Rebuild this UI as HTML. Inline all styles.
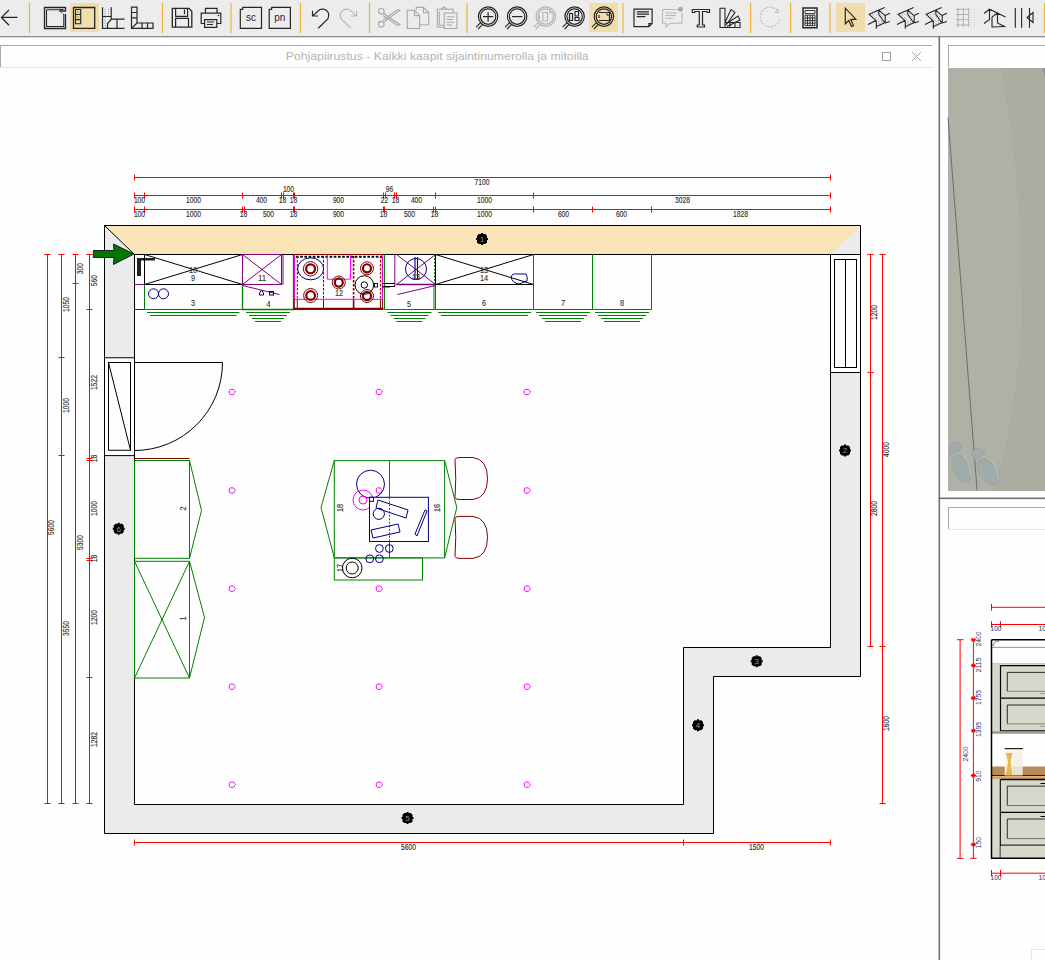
<!DOCTYPE html>
<html><head><meta charset="utf-8"><style>
html,body{margin:0;padding:0;background:#fff;width:1045px;height:960px;overflow:hidden}
svg{display:block;font-family:"Liberation Sans",sans-serif}
</style></head><body>
<svg width="1045" height="960" viewBox="0 0 1045 960">
<rect x="0" y="0" width="1045" height="960" fill="#fefefe"/>
<rect x="0" y="0" width="1045" height="36" fill="#ececec"/>
<rect x="0" y="36" width="1045" height="1.3" fill="#8c8c8c"/>
<line x1="29.5" y1="3" x2="29.5" y2="33" stroke="#f0b43c" stroke-width="1.2"/>
<line x1="162.5" y1="3" x2="162.5" y2="33" stroke="#f0b43c" stroke-width="1.2"/>
<line x1="231" y1="3" x2="231" y2="33" stroke="#f0b43c" stroke-width="1.2"/>
<line x1="300.5" y1="3" x2="300.5" y2="33" stroke="#f0b43c" stroke-width="1.2"/>
<line x1="369.5" y1="3" x2="369.5" y2="33" stroke="#f0b43c" stroke-width="1.2"/>
<line x1="467" y1="3" x2="467" y2="33" stroke="#f0b43c" stroke-width="1.2"/>
<line x1="623" y1="3" x2="623" y2="33" stroke="#f0b43c" stroke-width="1.2"/>
<line x1="750.6" y1="3" x2="750.6" y2="33" stroke="#f0b43c" stroke-width="1.2"/>
<line x1="790.6" y1="3" x2="790.6" y2="33" stroke="#f0b43c" stroke-width="1.2"/>
<line x1="830" y1="3" x2="830" y2="33" stroke="#f0b43c" stroke-width="1.2"/>
<rect x="70" y="3" width="29" height="29" fill="#f1dcab"/>
<rect x="589" y="3" width="29" height="29" fill="#f1dcab"/>
<rect x="836" y="3" width="29" height="29" fill="#f1dcab"/>
<path d="M1.2 17.4 H17.5 M9 10 L1.5 17.4 L9 25.2" fill="none" stroke="#262626" stroke-width="1.3" stroke-linejoin="miter" />
<path d="M59.5 11 H65.5 V7.5 H44.5 V28.5 H65.5 V14" fill="none" stroke="#262626" stroke-width="1.3" stroke-linejoin="miter" />
<path d="M59.5 9.5 H63.5 M46.5 9.7 H63.5 M46.5 9.7 V26.5 H63.8 V14" fill="none" stroke="#262626" stroke-width="1.1" stroke-linejoin="miter" />
<path d="M59.5 11 L64 14.5" fill="none" stroke="#262626" stroke-width="1" stroke-linejoin="miter" stroke-dasharray="1 1"/>
<path d="M73.5 7.5 H94.7 V28.4 H73.5 Z" fill="none" stroke="#262626" stroke-width="1.3" stroke-linejoin="miter" />
<path d="M75.5 9.5 H80.7 V23.7 H75.5 Z M75.5 14.5 H80.7 M75.5 19.6 H80.7" fill="none" stroke="#262626" stroke-width="1.1" stroke-linejoin="miter" />
<path d="M77 12 H79.5 M77 17 H79.5" fill="none" stroke="#b07a30" stroke-width="0.8" stroke-linejoin="miter" />
<path d="M102.5 7.2 V28.4 H124.5 M111.2 7.2 V19.2 H124.5 M102.5 16.5 H111.2 M111.2 19.5 L107.5 23.5 V28.4 M117 19.5 V28.4" fill="none" stroke="#262626" stroke-width="1.2" stroke-linejoin="miter" />
<path d="M105 9 V26 M108.5 9 V16" fill="none" stroke="#9a7a9a" stroke-width="0.8" stroke-linejoin="miter" stroke-dasharray="1 1"/>
<path d="M131.5 7.2 H137 V23 H153 V28.4 H131.5 Z M131.5 12.5 H137 M131.5 17.8 H137 M131.5 28.4 L137 23 M142 23 V28.4 M147.5 23 V28.4" fill="none" stroke="#262626" stroke-width="1.2" stroke-linejoin="miter" />
<path d="M172.3 8.3 H189 L191.8 11.2 V27.2 H172.3 Z" fill="none" stroke="#262626" stroke-width="1.3" stroke-linejoin="miter" />
<path d="M175.6 8.3 V16.3 H187.6 V8.3 M175.6 27.2 V18.4 H188.5 V27.2 M184.5 9.5 V14.3" fill="none" stroke="#262626" stroke-width="1.2" stroke-linejoin="miter" />
<path d="M205.5 13.2 V8.3 H217 V13.2 M204.6 23.5 H201.2 V13.2 H220.8 V23.5 H216.8 M204.6 19.6 H216.8 V27.3 H204.6 Z M207 22 H214 M207 24.5 H213" fill="none" stroke="#262626" stroke-width="1.2" stroke-linejoin="miter" />
<circle cx="218.5" cy="15.5" r="0.8" fill="#262626"/>
<path d="M240.3 9.4 H242.8 V7.4 H261.5 V28.4 H240.3 Z" fill="none" stroke="#262626" stroke-width="1.2" stroke-linejoin="miter" />
<text x="250.9" y="20.6" font-size="10" text-anchor="middle" fill="#262626">sc</text>
<path d="M269.2 9.4 H271.7 V7.4 H290.4 V28.4 H269.2 Z" fill="none" stroke="#262626" stroke-width="1.2" stroke-linejoin="miter" />
<text x="279.8" y="20.6" font-size="10" text-anchor="middle" fill="#262626">pn</text>
<path d="M318.3 28.2 L328 18.6 Q330 13.2 326.5 10.5 Q323 8.3 319.5 9.7 L312.8 15.8 M312.5 10.8 V16 H318" fill="none" stroke="#262626" stroke-width="1.2" stroke-linejoin="miter" />
<path d="M350.7 28.2 L341 18.6 Q339 13.2 342.5 10.5 Q346 8.3 349.5 9.7 L356.2 15.8 M356.5 10.8 V16 H351" fill="none" stroke="#b4b4b4" stroke-width="1.1" stroke-linejoin="miter" />
<circle cx="381.3" cy="11.3" r="2.8" fill="none" stroke="#a8a8a8" stroke-width="1.1"/>
<circle cx="381.3" cy="24.2" r="2.8" fill="none" stroke="#a8a8a8" stroke-width="1.1"/>
<path d="M383.5 13.2 L399.8 24.7 L397.5 25.5 L383 15.5 M383.5 22.3 L399.8 10.3 L397.5 9.5 L383 20" fill="none" stroke="#a8a8a8" stroke-width="1.1" stroke-linejoin="miter" />
<path d="M416.2 10.2 V7.4 H423.5 L428.7 12.8 V24.7 H419.6 M423.5 7.4 V12.8 H428.7" fill="none" stroke="#a8a8a8" stroke-width="1.1" stroke-linejoin="miter" />
<path d="M407.2 10.2 H414.5 L419.6 15.6 V28.5 H407.2 Z M414.5 10.2 V15.6 H419.6" fill="none" stroke="#a8a8a8" stroke-width="1.1" stroke-linejoin="miter" />
<path d="M444.2 27.3 H437.3 V9.3 H453.2 V13 M441 9.3 L444 7 L447 9.3 M439.3 11.3 V25.3 H444.2" fill="none" stroke="#a8a8a8" stroke-width="1.1" stroke-linejoin="miter" />
<path d="M444.2 13 H456.9 V28.5 H444.2 Z M446.8 16.7 H454.2 M446.8 19.5 H453 M446.8 22.3 H454.2 M446.8 25 H452" fill="none" stroke="#a8a8a8" stroke-width="1.1" stroke-linejoin="miter" />
<circle cx="488.1" cy="16.6" r="9.7" fill="none" stroke="#262626" stroke-width="1.2"/>
<circle cx="488.1" cy="16.6" r="7.7" fill="none" stroke="#262626" stroke-width="1.2"/>
<path d="M480.90000000000003 22.4 L476.1 27.2 M482.90000000000003 24.2 L478.1 29" fill="none" stroke="#262626" stroke-width="1.1" stroke-linejoin="miter" />
<path d="M483 16.6 H493.3 M488.1 12.2 V21.8" fill="none" stroke="#262626" stroke-width="1.2" stroke-linejoin="miter" />
<circle cx="517.1" cy="16.6" r="9.7" fill="none" stroke="#262626" stroke-width="1.2"/>
<circle cx="517.1" cy="16.6" r="7.7" fill="none" stroke="#262626" stroke-width="1.2"/>
<path d="M509.90000000000003 22.4 L505.1 27.2 M511.90000000000003 24.2 L507.1 29" fill="none" stroke="#262626" stroke-width="1.1" stroke-linejoin="miter" />
<path d="M512 16.6 H522.3" fill="none" stroke="#262626" stroke-width="1.2" stroke-linejoin="miter" />
<circle cx="545.8" cy="16.6" r="9.7" fill="none" stroke="#b4b4b4" stroke-width="1.2"/>
<circle cx="545.8" cy="16.6" r="7.7" fill="none" stroke="#b4b4b4" stroke-width="1.2"/>
<path d="M538.5999999999999 22.4 L533.8 27.2 M540.5999999999999 24.2 L535.8 29" fill="none" stroke="#b4b4b4" stroke-width="1.1" stroke-linejoin="miter" />
<path d="M543 12.5 H547.5 V21 H543 Z M549 11.5 L551 13.5 M539.5 15 V18.5" fill="none" stroke="#b4b4b4" stroke-width="1.1" stroke-linejoin="miter" />
<circle cx="574.6" cy="16.6" r="9.7" fill="none" stroke="#262626" stroke-width="1.2"/>
<circle cx="574.6" cy="16.6" r="7.7" fill="none" stroke="#262626" stroke-width="1.2"/>
<path d="M567.4 22.4 L562.6 27.2 M569.4 24.2 L564.6 29" fill="none" stroke="#262626" stroke-width="1.1" stroke-linejoin="miter" />
<path d="M569.5 13.5 H572.5 V20.5 H569.5 Z M575 11.5 H578.5 V16 H575 Z M575 17.5 H579 V20.5 H575 Z" fill="none" stroke="#262626" stroke-width="1.2" stroke-linejoin="miter" />
<circle cx="603.9" cy="16.6" r="9.7" fill="none" stroke="#262626" stroke-width="1.2"/>
<circle cx="603.9" cy="16.6" r="7.7" fill="none" stroke="#262626" stroke-width="1.2"/>
<path d="M596.6999999999999 22.4 L591.9 27.2 M598.6999999999999 24.2 L593.9 29" fill="none" stroke="#262626" stroke-width="1.1" stroke-linejoin="miter" />
<path d="M599 12.5 H609.5 V20.5 H599 M599 15 V18 M606.5 14 L608.5 15.5" fill="none" stroke="#262626" stroke-width="1.2" stroke-linejoin="miter" />
<path d="M634 9.1 H652.1 V23.5 L648.9 26.7 H634 Z M648.9 26.7 V23.5 H652.1 M636.8 11.8 H649 M636.8 14.2 H649 M636.8 16.6 H645.5" fill="none" stroke="#262626" stroke-width="1.2" stroke-linejoin="miter" />
<path d="M662.5 9.5 H678 M682 13 V23.2 H670 L666 27 V23.2 H662.5 V9.5 M665.5 13 H677 M665.5 15.5 H676 M665.5 18.2 H673" fill="none" stroke="#b8b8b8" stroke-width="1.1" stroke-linejoin="miter" />
<circle cx="680.5" cy="9.3" r="2.5" fill="#a8a8a8"/>
<path d="M692.3 9.5 H709.5 V12.5 H707 V11.5 H702.5 V25 H704.5 V27 H697.3 V25 H699.3 V11.5 H694.8 V12.5 H692.3 Z" fill="none" stroke="#262626" stroke-width="1.2" stroke-linejoin="miter" />
<path d="M720 8.3 H725 V27.5 H720 Z M725 27.5 H740 V22.5 H725 M730 22.5 V27.5 M735 22.5 V27.5 M725 22.5 L731 9.5 L735 12.5 L726 25 M726 24 L738 16 L740 20 L727 26.5" fill="none" stroke="#262626" stroke-width="1.1" stroke-linejoin="miter" />
<path d="M777.5 10.5 A9.8 9.8 0 1 0 779.8 18.5" fill="none" stroke="#b8b8b8" stroke-width="1.1" stroke-dasharray="2 1.3"/>
<path d="M774.5 12.5 H778 V9" fill="none" stroke="#b8b8b8" stroke-width="1.1" stroke-linejoin="miter" />
<path d="M803 8 H817 V27.7 H803 Z" fill="none" stroke="#262626" stroke-width="1.5" stroke-linejoin="miter" />
<path d="M805 10.5 H815 V13.6 H805 Z M805 15.2 H815 V25.6 H805 Z M805 18 H815 M805 20.6 H815 M805 23.2 H815 M807.5 15.2 V25.6 M810 15.2 V25.6 M812.5 15.2 V25.6" fill="none" stroke="#262626" stroke-width="0.9" stroke-linejoin="miter" />
<path d="M845.3 8.2 V23.8 L848.8 20.5 L851.5 26.5 L853.5 25.6 L850.8 19.6 L855.8 19.2 Z" fill="none" stroke="#262626" stroke-width="1.2" stroke-linejoin="miter" />
<g transform="translate(0 0)">
<path d="M868.6 14.5 L884.7 7.4 M868.9 14.2 L875.9 20.5 L868 24.4 M876.3 20.5 V28.8 M878.8 9.5 V14.2 M879.1 10.4 L885 15.7 M885.2 15.7 V23.2 M885 15.4 L889.9 13.3 M885 23 L889.9 21.5 M878.5 14 L884.7 22.7 L876.5 26.5" fill="none" stroke="#262626" stroke-width="1.1" stroke-linejoin="miter" />
<path d="M872 14 L878 20 M874.5 12.5 L881 18.5 M877 11.5 L883 17 M879 21 V27 M881.5 20 V26" fill="none" stroke="#8a6a9a" stroke-width="0.8" stroke-linejoin="miter" stroke-dasharray="1 1.2"/>
</g>
<g transform="translate(29 0)">
<path d="M868.6 14.5 L884.7 7.4 M868.9 14.2 L875.9 20.5 L868 24.4 M876.3 20.5 V28.8 M878.8 9.5 V14.2 M879.1 10.4 L885 15.7 M885.2 15.7 V23.2 M885 15.4 L889.9 13.3 M885 23 L889.9 21.5 M878.5 14 L884.7 22.7 L876.5 26.5" fill="none" stroke="#262626" stroke-width="1.1" stroke-linejoin="miter" />
<path d="M872 14 L878 20 M874.5 12.5 L881 18.5 M877 11.5 L883 17 M879 21 V27 M881.5 20 V26" fill="none" stroke="#8a6a9a" stroke-width="0.8" stroke-linejoin="miter" stroke-dasharray="1 1.2"/>
</g>
<g transform="translate(57 0)">
<path d="M868.6 14.5 L884.7 7.4 M868.9 14.2 L875.9 20.5 L868 24.4 M876.3 20.5 V28.8 M878.8 9.5 V14.2 M879.1 10.4 L885 15.7 M885.2 15.7 V23.2 M885 15.4 L889.9 13.3 M885 23 L889.9 21.5 M878.5 14 L884.7 22.7 L876.5 26.5" fill="none" stroke="#262626" stroke-width="1.1" stroke-linejoin="miter" />
<path d="M872 14 L878 20 M874.5 12.5 L881 18.5 M877 11.5 L883 17 M879 21 V27 M881.5 20 V26" fill="none" stroke="#8a6a9a" stroke-width="0.8" stroke-linejoin="miter" stroke-dasharray="1 1.2"/>
</g>
<path d="M956 9.3 H968.6 M956 14.5 H968.6 M956 19.7 H968.6 M956 25 H968.6 M958 8 V27 M963.3 8 V27 M968.6 8 V27" fill="none" stroke="#b0b0b0" stroke-width="1.0" stroke-linejoin="miter" />
<path d="M971 9.5 V26 M974.5 9.5 V26" fill="none" stroke="#c8b8a8" stroke-width="0.8" stroke-linejoin="miter" stroke-dasharray="1 1.5"/>
<path d="M984 13.5 L989.5 9.2 L1005.5 17 M984 23.5 L989.5 19.5 V9.2 M992 17 V27 L1005.5 26.5 M992 17 L997.5 13 V23 M997.5 23 L1005.5 27" fill="none" stroke="#262626" stroke-width="1.1" stroke-linejoin="miter" />
<path d="M1015.3 8 V27.8 M1021.6 8 V27.8 M1029.5 8 V27.8 M1033 12.5 L1027 17.5 L1033 22.5 Z" fill="none" stroke="#262626" stroke-width="1.1" stroke-linejoin="miter" />
<line x1="1044.5" y1="3" x2="1044.5" y2="33" stroke="#f0b43c" stroke-width="1.2"/>
<rect x="0.5" y="45.5" width="932" height="22" fill="#fefefe" stroke="none"/>
<line x1="0" y1="45.5" x2="932" y2="45.5" stroke="#a8a8a8" stroke-width="1"/>
<line x1="0.5" y1="45" x2="0.5" y2="67" stroke="#a8a8a8" stroke-width="1"/>
<line x1="0" y1="67.5" x2="932" y2="67.5" stroke="#e4e4e4" stroke-width="1"/>
<text x="285.7" y="60.1" font-size="11.4" text-anchor="start" fill="#b6b3b6" textLength="303" lengthAdjust="spacingAndGlyphs">Pohjapiirustus - Kaikki kaapit sijaintinumerolla ja mitoilla</text>
<rect x="882.5" y="52.5" width="8" height="8" fill="none" stroke="#a0a0a8" stroke-width="1"/>
<path d="M912 52 L921 61 M921 52 L912 61" stroke="#a8a0b0" stroke-width="1"/>
<rect x="938.5" y="36" width="1.6" height="924" fill="#707070"/>
<rect x="939" y="497.5" width="106" height="1.6" fill="#707070"/>
<line x1="948" y1="45.5" x2="1045" y2="45.5" stroke="#a8a8a8" stroke-width="1"/>
<line x1="948.5" y1="45" x2="948.5" y2="67" stroke="#a8a8a8" stroke-width="1"/>
<rect x="948" y="68" width="97" height="423" fill="#adb0a5"/>
<line x1="948" y1="507.5" x2="1045" y2="507.5" stroke="#a8a8a8" stroke-width="1"/>
<line x1="948.5" y1="507" x2="948.5" y2="529" stroke="#a8a8a8" stroke-width="1"/>
<line x1="948" y1="529.5" x2="1045" y2="529.5" stroke="#e4e4e4" stroke-width="1"/>
<path d="M104.5 225.5 L860.5 225.5 L860.5 676.5 L713.5 676.5 L713.5 833.5 L104.5 833.5 Z M134.5 254.5 L830.5 254.5 L830.5 647.5 L683.5 647.5 L683.5 804.5 L134.5 804.5 Z" fill="#ebebeb" fill-rule="evenodd"/>
<path d="M104.5 225.5 L860.5 225.5 L830.5 254.5 L134.5 254.5 Z" fill="#f9e4b8"/>
<path d="M104.5 225.5 L860.5 225.5 L860.5 676.5 L713.5 676.5 L713.5 833.5 L104.5 833.5 Z" fill="none" stroke="#000" stroke-width="1"/>
<path d="M134.5 254.5 L830.5 254.5 L830.5 647.5 L683.5 647.5 L683.5 804.5 L134.5 804.5 Z" fill="none" stroke="#000" stroke-width="1"/>
<line x1="134.50" y1="177.5" x2="830.50" y2="177.5" stroke="#ff0000" stroke-width="1"/>
<line x1="134.50" y1="174.5" x2="134.50" y2="180.5" stroke="#ff0000" stroke-width="1"/>
<line x1="830.50" y1="174.5" x2="830.50" y2="180.5" stroke="#ff0000" stroke-width="1"/>
<line x1="134.50" y1="195.5" x2="830.50" y2="195.5" stroke="#ff0000" stroke-width="1"/>
<line x1="134.50" y1="192.5" x2="134.50" y2="198.5" stroke="#ff0000" stroke-width="1"/>
<line x1="144.50" y1="192.5" x2="144.50" y2="198.5" stroke="#ff0000" stroke-width="1"/>
<line x1="242.50" y1="192.5" x2="242.50" y2="198.5" stroke="#ff0000" stroke-width="1"/>
<line x1="281.50" y1="192.5" x2="281.50" y2="198.5" stroke="#ff0000" stroke-width="1"/>
<line x1="283.50" y1="192.5" x2="283.50" y2="198.5" stroke="#ff0000" stroke-width="1"/>
<line x1="293.50" y1="192.5" x2="293.50" y2="198.5" stroke="#ff0000" stroke-width="1"/>
<line x1="294.50" y1="192.5" x2="294.50" y2="198.5" stroke="#ff0000" stroke-width="1"/>
<line x1="383.50" y1="192.5" x2="383.50" y2="198.5" stroke="#ff0000" stroke-width="1"/>
<line x1="385.50" y1="192.5" x2="385.50" y2="198.5" stroke="#ff0000" stroke-width="1"/>
<line x1="394.50" y1="192.5" x2="394.50" y2="198.5" stroke="#ff0000" stroke-width="1"/>
<line x1="396.50" y1="192.5" x2="396.50" y2="198.5" stroke="#ff0000" stroke-width="1"/>
<line x1="435.50" y1="192.5" x2="435.50" y2="198.5" stroke="#ff0000" stroke-width="1"/>
<line x1="533.50" y1="192.5" x2="533.50" y2="198.5" stroke="#ff0000" stroke-width="1"/>
<line x1="830.50" y1="192.5" x2="830.50" y2="198.5" stroke="#ff0000" stroke-width="1"/>
<line x1="134.50" y1="209.5" x2="830.50" y2="209.5" stroke="#ff0000" stroke-width="1"/>
<line x1="134.50" y1="206.5" x2="134.50" y2="212.5" stroke="#ff0000" stroke-width="1"/>
<line x1="144.50" y1="206.5" x2="144.50" y2="212.5" stroke="#ff0000" stroke-width="1"/>
<line x1="242.50" y1="206.5" x2="242.50" y2="212.5" stroke="#ff0000" stroke-width="1"/>
<line x1="244.50" y1="206.5" x2="244.50" y2="212.5" stroke="#ff0000" stroke-width="1"/>
<line x1="293.50" y1="206.5" x2="293.50" y2="212.5" stroke="#ff0000" stroke-width="1"/>
<line x1="294.50" y1="206.5" x2="294.50" y2="212.5" stroke="#ff0000" stroke-width="1"/>
<line x1="383.50" y1="206.5" x2="383.50" y2="212.5" stroke="#ff0000" stroke-width="1"/>
<line x1="384.50" y1="206.5" x2="384.50" y2="212.5" stroke="#ff0000" stroke-width="1"/>
<line x1="433.50" y1="206.5" x2="433.50" y2="212.5" stroke="#ff0000" stroke-width="1"/>
<line x1="435.50" y1="206.5" x2="435.50" y2="212.5" stroke="#ff0000" stroke-width="1"/>
<line x1="533.50" y1="206.5" x2="533.50" y2="212.5" stroke="#ff0000" stroke-width="1"/>
<line x1="592.50" y1="206.5" x2="592.50" y2="212.5" stroke="#ff0000" stroke-width="1"/>
<line x1="651.50" y1="206.5" x2="651.50" y2="212.5" stroke="#ff0000" stroke-width="1"/>
<line x1="830.50" y1="206.5" x2="830.50" y2="212.5" stroke="#ff0000" stroke-width="1"/>
<line x1="47.5" y1="254.50" x2="47.5" y2="803.50" stroke="#ff0000" stroke-width="1"/>
<line x1="44.5" y1="254.50" x2="50.5" y2="254.50" stroke="#ff0000" stroke-width="1"/>
<line x1="44.5" y1="803.50" x2="50.5" y2="803.50" stroke="#ff0000" stroke-width="1"/>
<line x1="61.5" y1="254.50" x2="61.5" y2="803.50" stroke="#ff0000" stroke-width="1"/>
<line x1="58.5" y1="254.50" x2="64.5" y2="254.50" stroke="#ff0000" stroke-width="1"/>
<line x1="58.5" y1="357.50" x2="64.5" y2="357.50" stroke="#ff0000" stroke-width="1"/>
<line x1="58.5" y1="455.50" x2="64.5" y2="455.50" stroke="#ff0000" stroke-width="1"/>
<line x1="58.5" y1="803.50" x2="64.5" y2="803.50" stroke="#ff0000" stroke-width="1"/>
<line x1="75.5" y1="254.50" x2="75.5" y2="803.50" stroke="#ff0000" stroke-width="1"/>
<line x1="72.5" y1="254.50" x2="78.5" y2="254.50" stroke="#ff0000" stroke-width="1"/>
<line x1="72.5" y1="283.50" x2="78.5" y2="283.50" stroke="#ff0000" stroke-width="1"/>
<line x1="72.5" y1="803.50" x2="78.5" y2="803.50" stroke="#ff0000" stroke-width="1"/>
<line x1="89.5" y1="254.50" x2="89.5" y2="803.50" stroke="#ff0000" stroke-width="1"/>
<line x1="86.5" y1="254.50" x2="92.5" y2="254.50" stroke="#ff0000" stroke-width="1"/>
<line x1="86.5" y1="309.50" x2="92.5" y2="309.50" stroke="#ff0000" stroke-width="1"/>
<line x1="86.5" y1="458.50" x2="92.5" y2="458.50" stroke="#ff0000" stroke-width="1"/>
<line x1="86.5" y1="460.50" x2="92.5" y2="460.50" stroke="#ff0000" stroke-width="1"/>
<line x1="86.5" y1="558.50" x2="92.5" y2="558.50" stroke="#ff0000" stroke-width="1"/>
<line x1="86.5" y1="560.50" x2="92.5" y2="560.50" stroke="#ff0000" stroke-width="1"/>
<line x1="86.5" y1="677.50" x2="92.5" y2="677.50" stroke="#ff0000" stroke-width="1"/>
<line x1="86.5" y1="803.50" x2="92.5" y2="803.50" stroke="#ff0000" stroke-width="1"/>
<line x1="870.5" y1="254.50" x2="870.5" y2="646.50" stroke="#ff0000" stroke-width="1"/>
<line x1="867.5" y1="254.50" x2="873.5" y2="254.50" stroke="#ff0000" stroke-width="1"/>
<line x1="867.5" y1="372.50" x2="873.5" y2="372.50" stroke="#ff0000" stroke-width="1"/>
<line x1="867.5" y1="646.50" x2="873.5" y2="646.50" stroke="#ff0000" stroke-width="1"/>
<line x1="882.5" y1="254.50" x2="882.5" y2="803.50" stroke="#ff0000" stroke-width="1"/>
<line x1="879.5" y1="254.50" x2="885.5" y2="254.50" stroke="#ff0000" stroke-width="1"/>
<line x1="879.5" y1="646.50" x2="885.5" y2="646.50" stroke="#ff0000" stroke-width="1"/>
<line x1="879.5" y1="803.50" x2="885.5" y2="803.50" stroke="#ff0000" stroke-width="1"/>
<line x1="134.50" y1="842.5" x2="830.50" y2="842.5" stroke="#ff0000" stroke-width="1"/>
<line x1="134.50" y1="839.5" x2="134.50" y2="845.5" stroke="#ff0000" stroke-width="1"/>
<line x1="683.50" y1="839.5" x2="683.50" y2="845.5" stroke="#ff0000" stroke-width="1"/>
<line x1="830.50" y1="839.5" x2="830.50" y2="845.5" stroke="#ff0000" stroke-width="1"/>
<rect x="104.5" y="357.75" width="30" height="97.85" fill="#fefefe" stroke="#000" stroke-width="1"/>
<rect x="108.5" y="362.5" width="22" height="87.75" fill="none" stroke="#000" stroke-width="1"/>
<line x1="108.5" y1="362.5" x2="130.5" y2="450.25" stroke="#000" stroke-width="1"/>
<path d="M134.5 362.5 L222.5 362.5 A88 88 0 0 1 134.5 450.5" fill="none" stroke="#000" stroke-width="1"/>
<rect x="830.5" y="254.5" width="30" height="118" fill="#fefefe" stroke="#000" stroke-width="1"/>
<rect x="834.5" y="259.5" width="22" height="108" fill="none" stroke="#000" stroke-width="1"/>
<line x1="845.5" y1="259.5" x2="845.5" y2="367.5" stroke="#000" stroke-width="1"/>
<line x1="830.5" y1="372.5" x2="830.5" y2="647.5" stroke="#000" stroke-width="1"/>
<line x1="104.5" y1="225.5" x2="134.5" y2="254.5" stroke="#000" stroke-width="1"/>
<polygon points="478.70,234.00 485.30,234.00 487.00,235.70 487.00,242.30 485.30,244.00 478.70,244.00 477.00,242.30 477.00,235.70" fill="#000"/>
<path d="M481 233 h2 v1.5 h-2 Z M481 243.5 h2 v1.5 h-2 Z M476 238 v2 h1.5 v-2 Z M486.5 238 v2 h1.5 v-2 Z" fill="#000"/>
<text x="482" y="242" font-size="8" text-anchor="middle" fill="#8a9aaa">1</text>
<polygon points="841.70,445.40 848.30,445.40 850.00,447.10 850.00,453.70 848.30,455.40 841.70,455.40 840.00,453.70 840.00,447.10" fill="#000"/>
<path d="M844 444.4 h2 v1.5 h-2 Z M844 454.9 h2 v1.5 h-2 Z M839 449.4 v2 h1.5 v-2 Z M849.5 449.4 v2 h1.5 v-2 Z" fill="#000"/>
<text x="845" y="453.4" font-size="8" text-anchor="middle" fill="#8a9aaa">2</text>
<polygon points="753.40,656.20 760.00,656.20 761.70,657.90 761.70,664.50 760.00,666.20 753.40,666.20 751.70,664.50 751.70,657.90" fill="#000"/>
<path d="M755.7 655.2 h2 v1.5 h-2 Z M755.7 665.7 h2 v1.5 h-2 Z M750.7 660.2 v2 h1.5 v-2 Z M761.2 660.2 v2 h1.5 v-2 Z" fill="#000"/>
<text x="756.7" y="664.2" font-size="8" text-anchor="middle" fill="#8a9aaa">3</text>
<polygon points="694.70,720.20 701.30,720.20 703.00,721.90 703.00,728.50 701.30,730.20 694.70,730.20 693.00,728.50 693.00,721.90" fill="#000"/>
<path d="M697 719.2 h2 v1.5 h-2 Z M697 729.7 h2 v1.5 h-2 Z M692 724.2 v2 h1.5 v-2 Z M702.5 724.2 v2 h1.5 v-2 Z" fill="#000"/>
<text x="698" y="728.2" font-size="8" text-anchor="middle" fill="#8a9aaa">4</text>
<polygon points="404.20,813.00 410.80,813.00 412.50,814.70 412.50,821.30 410.80,823.00 404.20,823.00 402.50,821.30 402.50,814.70" fill="#000"/>
<path d="M406.5 812 h2 v1.5 h-2 Z M406.5 822.5 h2 v1.5 h-2 Z M401.5 817 v2 h1.5 v-2 Z M412.0 817 v2 h1.5 v-2 Z" fill="#000"/>
<text x="407.5" y="821" font-size="8" text-anchor="middle" fill="#8a9aaa">5</text>
<polygon points="115.45,523.75 122.05,523.75 123.75,525.45 123.75,532.05 122.05,533.75 115.45,533.75 113.75,532.05 113.75,525.45" fill="#000"/>
<path d="M117.75 522.75 h2 v1.5 h-2 Z M117.75 533.25 h2 v1.5 h-2 Z M112.75 527.75 v2 h1.5 v-2 Z M123.25 527.75 v2 h1.5 v-2 Z" fill="#000"/>
<text x="118.75" y="531.75" font-size="8" text-anchor="middle" fill="#8a9aaa">6</text>
<path d="M230.3 389.4 H233.5 L234.5 390.7 L235.5 392.0 L234.5 392.8 V393.6 L233.5 394.6 H230.3 L229.3 393.6 V390.4 Z" fill="none" stroke="#ff00ff" stroke-width="1"/>
<path d="M230.3 487.9 H233.5 L234.5 489.2 L235.5 490.5 L234.5 491.3 V492.1 L233.5 493.1 H230.3 L229.3 492.1 V488.9 Z" fill="none" stroke="#ff00ff" stroke-width="1"/>
<path d="M230.3 586.1 H233.5 L234.5 587.4000000000001 L235.5 588.7 L234.5 589.5 V590.3000000000001 L233.5 591.3000000000001 H230.3 L229.3 590.3000000000001 V587.1 Z" fill="none" stroke="#ff00ff" stroke-width="1"/>
<path d="M230.3 684.1 H233.5 L234.5 685.4000000000001 L235.5 686.7 L234.5 687.5 V688.3000000000001 L233.5 689.3000000000001 H230.3 L229.3 688.3000000000001 V685.1 Z" fill="none" stroke="#ff00ff" stroke-width="1"/>
<path d="M230.3 782.1 H233.5 L234.5 783.4000000000001 L235.5 784.7 L234.5 785.5 V786.3000000000001 L233.5 787.3000000000001 H230.3 L229.3 786.3000000000001 V783.1 Z" fill="none" stroke="#ff00ff" stroke-width="1"/>
<path d="M377.29999999999995 389.4 H380.5 L381.5 390.7 L382.5 392.0 L381.5 392.8 V393.6 L380.5 394.6 H377.29999999999995 L376.29999999999995 393.6 V390.4 Z" fill="none" stroke="#ff00ff" stroke-width="1"/>
<path d="M377.29999999999995 487.9 H380.5 L381.5 489.2 L382.5 490.5 L381.5 491.3 V492.1 L380.5 493.1 H377.29999999999995 L376.29999999999995 492.1 V488.9 Z" fill="none" stroke="#ff00ff" stroke-width="1"/>
<path d="M377.29999999999995 586.1 H380.5 L381.5 587.4000000000001 L382.5 588.7 L381.5 589.5 V590.3000000000001 L380.5 591.3000000000001 H377.29999999999995 L376.29999999999995 590.3000000000001 V587.1 Z" fill="none" stroke="#ff00ff" stroke-width="1"/>
<path d="M377.29999999999995 684.1 H380.5 L381.5 685.4000000000001 L382.5 686.7 L381.5 687.5 V688.3000000000001 L380.5 689.3000000000001 H377.29999999999995 L376.29999999999995 688.3000000000001 V685.1 Z" fill="none" stroke="#ff00ff" stroke-width="1"/>
<path d="M377.29999999999995 782.1 H380.5 L381.5 783.4000000000001 L382.5 784.7 L381.5 785.5 V786.3000000000001 L380.5 787.3000000000001 H377.29999999999995 L376.29999999999995 786.3000000000001 V783.1 Z" fill="none" stroke="#ff00ff" stroke-width="1"/>
<path d="M525.3 389.4 H528.5 L529.5 390.7 L530.5 392.0 L529.5 392.8 V393.6 L528.5 394.6 H525.3 L524.3 393.6 V390.4 Z" fill="none" stroke="#ff00ff" stroke-width="1"/>
<path d="M525.3 487.9 H528.5 L529.5 489.2 L530.5 490.5 L529.5 491.3 V492.1 L528.5 493.1 H525.3 L524.3 492.1 V488.9 Z" fill="none" stroke="#ff00ff" stroke-width="1"/>
<path d="M525.3 586.1 H528.5 L529.5 587.4000000000001 L530.5 588.7 L529.5 589.5 V590.3000000000001 L528.5 591.3000000000001 H525.3 L524.3 590.3000000000001 V587.1 Z" fill="none" stroke="#ff00ff" stroke-width="1"/>
<path d="M525.3 684.1 H528.5 L529.5 685.4000000000001 L530.5 686.7 L529.5 687.5 V688.3000000000001 L528.5 689.3000000000001 H525.3 L524.3 688.3000000000001 V685.1 Z" fill="none" stroke="#ff00ff" stroke-width="1"/>
<path d="M525.3 782.1 H528.5 L529.5 783.4000000000001 L530.5 784.7 L529.5 785.5 V786.3000000000001 L528.5 787.3000000000001 H525.3 L524.3 786.3000000000001 V783.1 Z" fill="none" stroke="#ff00ff" stroke-width="1"/>
<path d="M93.3 250.5 L114 250.5 L113.5 244 L134 254 L113.5 264.5 L114 257.5 L93.3 257.5 Z" fill="#007800" stroke="#000" stroke-width="0.8"/>
<line x1="134.5" y1="284.5" x2="144.50" y2="284.5" stroke="#800080" stroke-width="1"/>
<line x1="134.5" y1="309.5" x2="144.50" y2="309.5" stroke="#800000" stroke-width="1"/>
<path d="M137 258 L155 258 L155 260.5 L141 260.5 L141 276 L137 276 Z" fill="#222"/>
<path d="M144.50 284.5 L144.50 309.5 L242.50 309.5 L242.50 284.5" fill="none" stroke="#008000" stroke-width="1"/>
<rect x="144.50" y="254.5" width="98.00" height="30.00" fill="none" stroke="#000" stroke-width="1"/>
<path d="M144.50 254.5 L242.50 284.5 M242.50 254.5 L144.50 284.5" stroke="#000" stroke-width="1"/>
<circle cx="153.5" cy="293.8" r="5" fill="none" stroke="#000080" stroke-width="1"/>
<circle cx="163.5" cy="293.8" r="5" fill="none" stroke="#000080" stroke-width="1"/>
<text x="193.00" y="273.00" font-size="8.6" text-anchor="middle" fill="#333" textLength="8.20" lengthAdjust="spacingAndGlyphs" stroke="#333" stroke-width="0.12">10</text>
<text x="193.00" y="281.00" font-size="8.6" text-anchor="middle" fill="#333" textLength="4.10" lengthAdjust="spacingAndGlyphs" stroke="#333" stroke-width="0.12">9</text>
<text x="193.00" y="306.00" font-size="8.6" text-anchor="middle" fill="#333" textLength="4.10" lengthAdjust="spacingAndGlyphs" stroke="#333" stroke-width="0.12">3</text>
<line x1="147.00" y1="312.50" x2="239.50" y2="312.50" stroke="#008000" stroke-width="1"/>
<line x1="150.00" y1="315.50" x2="236.50" y2="315.50" stroke="#008000" stroke-width="1"/>
<path d="M242.50 284.5 L242.50 309.5 L293.50 309.5 L293.50 254.5" fill="none" stroke="#008000" stroke-width="1.3"/>
<rect x="242.50" y="254.5" width="39.00" height="30.00" fill="none" stroke="#800080" stroke-width="1"/>
<path d="M242.50 254.5 L281.50 284.5 M281.50 254.5 L242.50 284.5" stroke="#800080" stroke-width="1"/>
<line x1="283.00" y1="254.5" x2="283.00" y2="284.5" stroke="#800080" stroke-width="1"/>
<line x1="242.50" y1="284.5" x2="280.00" y2="284.5" stroke="#800080" stroke-width="1"/>
<line x1="242.50" y1="285.5" x2="279.5" y2="294.5" stroke="#800080" stroke-width="1"/>
<path d="M259.5 293 L261.5 290 L263.5 293 L263.5 295 L259.5 295 Z" fill="none" stroke="#000080" stroke-width="1"/>
<rect x="269.5" y="291.5" width="4" height="3.5" fill="none" stroke="#000080" stroke-width="1"/>
<text x="262.00" y="280.50" font-size="8.6" text-anchor="middle" fill="#333" textLength="8.20" lengthAdjust="spacingAndGlyphs" stroke="#333" stroke-width="0.12">11</text>
<text x="268.50" y="306.50" font-size="8.6" text-anchor="middle" fill="#333" textLength="4.10" lengthAdjust="spacingAndGlyphs" stroke="#333" stroke-width="0.12">4</text>
<line x1="246.00" y1="312.50" x2="290.00" y2="312.50" stroke="#008000" stroke-width="1"/>
<line x1="249.00" y1="315.50" x2="287.00" y2="315.50" stroke="#008000" stroke-width="1"/>
<line x1="252.00" y1="318.50" x2="284.00" y2="318.50" stroke="#008000" stroke-width="1"/>
<line x1="255.00" y1="321.50" x2="281.00" y2="321.50" stroke="#008000" stroke-width="1"/>
<rect x="294.3" y="254.5" width="88.3" height="55.00" fill="none" stroke="#800000" stroke-width="1"/>
<line x1="293" y1="308.8" x2="383.5" y2="308.8" stroke="#800000" stroke-width="2"/>
<line x1="296" y1="256.8" x2="382" y2="256.8" stroke="#000" stroke-width="2" stroke-dasharray="2.6 1.6"/>
<line x1="297.3" y1="256" x2="297.3" y2="299" stroke="#800000" stroke-width="1" stroke-dasharray="2.5 1.5"/>
<line x1="297.3" y1="299" x2="297.3" y2="308" stroke="#800000" stroke-width="1"/>
<line x1="323.5" y1="256" x2="323.5" y2="299" stroke="#800000" stroke-width="1" stroke-dasharray="2.5 1.5"/>
<line x1="323.5" y1="299" x2="323.5" y2="308" stroke="#800000" stroke-width="1"/>
<line x1="353.6" y1="256" x2="353.6" y2="299" stroke="#800000" stroke-width="1.6" stroke-dasharray="2.5 1.5"/>
<line x1="353.6" y1="299" x2="353.6" y2="308" stroke="#800000" stroke-width="1.6"/>
<line x1="380.4" y1="256" x2="380.4" y2="299" stroke="#800000" stroke-width="1" stroke-dasharray="2.5 1.5"/>
<line x1="380.4" y1="299" x2="380.4" y2="308" stroke="#800000" stroke-width="1"/>
<path d="M294.3 254.5 L294.3 299.3 L382.3 299.3 L382.3 254.5" fill="none" stroke="#ff00ff" stroke-width="1"/>
<path d="M327.3 254.5 L327.3 279.2 L350.5 279.2 L350.5 254.5" fill="none" stroke="#ff00ff" stroke-width="1"/>
<ellipse cx="310.6" cy="268.8" rx="13" ry="11" fill="none" stroke="#000080" stroke-width="1"/>
<circle cx="310.6" cy="268.8" r="7.2" fill="none" stroke="#800000" stroke-width="1"/>
<circle cx="310.6" cy="268.8" r="4.46" fill="none" stroke="#800000" stroke-width="2.2"/>
<rect x="309.40000000000003" y="267.6" width="2.4" height="2.4" fill="#fff"/>
<circle cx="310.6" cy="295.5" r="7" fill="none" stroke="#800000" stroke-width="1"/>
<circle cx="310.6" cy="295.5" r="4.34" fill="none" stroke="#800000" stroke-width="2.2"/>
<rect x="309.40000000000003" y="294.3" width="2.4" height="2.4" fill="#fff"/>
<circle cx="338.8" cy="282.5" r="6.5" fill="none" stroke="#800000" stroke-width="1"/>
<circle cx="338.8" cy="282.5" r="4.03" fill="none" stroke="#800000" stroke-width="2.2"/>
<rect x="337.6" y="281.3" width="2.4" height="2.4" fill="#fff"/>
<circle cx="367" cy="268.3" r="6.5" fill="none" stroke="#800000" stroke-width="1"/>
<circle cx="367" cy="268.3" r="4.03" fill="none" stroke="#800000" stroke-width="2.2"/>
<rect x="365.8" y="267.1" width="2.4" height="2.4" fill="#fff"/>
<circle cx="367" cy="296" r="6.5" fill="none" stroke="#800000" stroke-width="1"/>
<circle cx="367" cy="296" r="4.03" fill="none" stroke="#800000" stroke-width="2.2"/>
<rect x="365.8" y="294.8" width="2.4" height="2.4" fill="#fff"/>
<circle cx="364.3" cy="285" r="9.3" fill="none" stroke="#000" stroke-width="1"/>
<circle cx="364.3" cy="285" r="3.2" fill="none" stroke="#000" stroke-width="1"/>
<rect x="374.5" y="283.5" width="3" height="3.5" fill="none" stroke="#000" stroke-width="0.9"/>
<path d="M382.5 283.5 L390 283.5 M382.5 287 L390 287" stroke="#000" stroke-width="0.9"/>
<text x="339.00" y="296.00" font-size="8.6" text-anchor="middle" fill="#333" textLength="8.20" lengthAdjust="spacingAndGlyphs" stroke="#333" stroke-width="0.12">12</text>
<path d="M384.50 254.5 L384.50 309.5 L435.50 309.5 L435.50 284.5" fill="none" stroke="#008000" stroke-width="1"/>
<line x1="434.00" y1="284.5" x2="434.00" y2="309.5" stroke="#008000" stroke-width="1"/>
<path d="M382.5 283.5 L394.8 283.5 L394.8 286.5 L382.5 286.5" fill="none" stroke="#000" stroke-width="1"/>
<line x1="394.8" y1="254.5" x2="394.8" y2="284" stroke="#800080" stroke-width="1"/>
<path d="M396.50 284.5 L435.50 284.5" stroke="#800080" stroke-width="1.3"/>
<path d="M396.50 254.5 L435.50 284.5 M435.50 254.5 L396.50 284.5" stroke="#800080" stroke-width="1"/>
<line x1="434.50" y1="254.5" x2="434.50" y2="284.5" stroke="#008000" stroke-width="1" stroke-dasharray="2 1.5"/>
<ellipse cx="416" cy="269" rx="10.5" ry="10.5" fill="none" stroke="#000080" stroke-width="1"/>
<path d="M415 257 L415 279 M417.5 257 L417.5 279" stroke="#000080" stroke-width="1.1"/>
<line x1="435.50" y1="285.5" x2="397.5" y2="294.5" stroke="#800080" stroke-width="1"/>
<text x="416.00" y="280.00" font-size="8.6" text-anchor="middle" fill="#333" textLength="8.20" lengthAdjust="spacingAndGlyphs" stroke="#333" stroke-width="0.12">13</text>
<text x="409.00" y="306.50" font-size="8.6" text-anchor="middle" fill="#333" textLength="4.10" lengthAdjust="spacingAndGlyphs" stroke="#333" stroke-width="0.12">5</text>
<line x1="387.50" y1="312.50" x2="431.50" y2="312.50" stroke="#008000" stroke-width="1"/>
<line x1="390.50" y1="315.50" x2="428.50" y2="315.50" stroke="#008000" stroke-width="1"/>
<line x1="393.50" y1="318.50" x2="425.50" y2="318.50" stroke="#008000" stroke-width="1"/>
<line x1="396.50" y1="321.50" x2="422.50" y2="321.50" stroke="#008000" stroke-width="1"/>
<path d="M435.50 284.5 L435.50 309.5 L533.50 309.5 L533.50 284.5" fill="none" stroke="#008000" stroke-width="1"/>
<rect x="435.50" y="254.5" width="98.00" height="30.00" fill="none" stroke="#000" stroke-width="1"/>
<path d="M435.50 254.5 L533.50 284.5 M533.50 254.5 L435.50 284.5" stroke="#000" stroke-width="1"/>
<path d="M511 277 Q512 273 518 274 L526 274 Q528 277 527 281 L519 284 Q512 283 511 277 Z" fill="none" stroke="#000080" stroke-width="1"/>
<text x="484.00" y="273.00" font-size="8.6" text-anchor="middle" fill="#333" textLength="8.20" lengthAdjust="spacingAndGlyphs" stroke="#333" stroke-width="0.12">15</text>
<text x="484.00" y="281.00" font-size="8.6" text-anchor="middle" fill="#333" textLength="8.20" lengthAdjust="spacingAndGlyphs" stroke="#333" stroke-width="0.12">14</text>
<text x="484.00" y="306.00" font-size="8.6" text-anchor="middle" fill="#333" textLength="4.10" lengthAdjust="spacingAndGlyphs" stroke="#333" stroke-width="0.12">6</text>
<line x1="438.00" y1="312.50" x2="531.00" y2="312.50" stroke="#008000" stroke-width="1"/>
<line x1="441.00" y1="315.50" x2="528.00" y2="315.50" stroke="#008000" stroke-width="1"/>
<path d="M533.50 254.5 L533.50 309.5 L592.50 309.5 L592.50 254.5" fill="none" stroke="#008000" stroke-width="1"/>
<text x="563.00" y="306.00" font-size="8.6" text-anchor="middle" fill="#333" textLength="4.10" lengthAdjust="spacingAndGlyphs" stroke="#333" stroke-width="0.12">7</text>
<line x1="536.00" y1="312.50" x2="590.00" y2="312.50" stroke="#008000" stroke-width="1"/>
<line x1="539.00" y1="315.50" x2="587.00" y2="315.50" stroke="#008000" stroke-width="1"/>
<line x1="542.00" y1="318.50" x2="584.00" y2="318.50" stroke="#008000" stroke-width="1"/>
<line x1="545.00" y1="321.50" x2="581.00" y2="321.50" stroke="#008000" stroke-width="1"/>
<path d="M592.50 254.5 L592.50 309.5 L651.50 309.5 L651.50 254.5" fill="none" stroke="#008000" stroke-width="1"/>
<text x="622.00" y="306.00" font-size="8.6" text-anchor="middle" fill="#333" textLength="4.10" lengthAdjust="spacingAndGlyphs" stroke="#333" stroke-width="0.12">8</text>
<line x1="595.00" y1="312.50" x2="649.00" y2="312.50" stroke="#008000" stroke-width="1"/>
<line x1="598.00" y1="315.50" x2="646.00" y2="315.50" stroke="#008000" stroke-width="1"/>
<line x1="601.00" y1="318.50" x2="643.00" y2="318.50" stroke="#008000" stroke-width="1"/>
<line x1="604.00" y1="321.50" x2="640.00" y2="321.50" stroke="#008000" stroke-width="1"/>
<line x1="134.5" y1="458.5" x2="189.5" y2="458.5" stroke="#800000" stroke-width="1"/>
<rect x="134.5" y="460.5" width="55" height="97.8" fill="none" stroke="#008000" stroke-width="1"/>
<path d="M189.5 460.5 L201.5 510.5 L189.5 558.3" fill="none" stroke="#008000" stroke-width="1"/>
<rect x="134.5" y="561.3" width="55" height="116.7" fill="none" stroke="#008000" stroke-width="1"/>
<path d="M134.5 561.3 L189.5 678 M189.5 561.3 L134.5 678" stroke="#008000" stroke-width="1"/>
<path d="M189.5 561.3 L204.5 617.5 L189.5 678" fill="none" stroke="#008000" stroke-width="1"/>
<text x="186.00" y="508.50" font-size="8.6" text-anchor="middle" fill="#333" transform="rotate(-90 186.00 508.50)" textLength="4.10" lengthAdjust="spacingAndGlyphs" stroke="#333" stroke-width="0.12">2</text>
<text x="186.00" y="618.50" font-size="8.6" text-anchor="middle" fill="#333" transform="rotate(-90 186.00 618.50)" textLength="4.10" lengthAdjust="spacingAndGlyphs" stroke="#333" stroke-width="0.12">1</text>
<rect x="334.3" y="460.6" width="110.3" height="97.3" fill="none" stroke="#008000" stroke-width="1"/>
<line x1="389.5" y1="460.6" x2="389.5" y2="557.9" stroke="#008000" stroke-width="1"/>
<path d="M334.3 460.6 L321 507.4 L334.3 557.9 M444.6 460.6 L456.8 507.4 L444.6 557.9" fill="none" stroke="#008000" stroke-width="1"/>
<rect x="334.3" y="557.9" width="88.2" height="22.1" fill="none" stroke="#008000" stroke-width="1"/>
<circle cx="370.5" cy="484.2" r="14" fill="none" stroke="#000080" stroke-width="1"/>
<circle cx="363" cy="500" r="10" fill="none" stroke="#ff00ff" stroke-width="1"/>
<circle cx="363" cy="500" r="4" fill="none" stroke="#ff00ff" stroke-width="1"/>
<rect x="369.5" y="497.3" width="58.9" height="44.2" fill="#fefefe" stroke="#000080" stroke-width="1"/>
<line x1="389.5" y1="497.3" x2="389.5" y2="541.5" stroke="#008000" stroke-width="1" stroke-dasharray="2 1.5"/>
<path d="M378 500 L408 510 L406 518 L376 508 Z" fill="none" stroke="#000080" stroke-width="1"/>
<path d="M371 530 L398 524 L400 532 L373 538 Z" fill="none" stroke="#000080" stroke-width="1"/>
<path d="M415 534 L425 510 L427 511 L417 536 Z" fill="none" stroke="#000080" stroke-width="1"/>
<circle cx="378.8" cy="513.8" r="5.6" fill="none" stroke="#000080" stroke-width="1"/>
<rect x="369.5" y="497.3" width="4" height="4" fill="none" stroke="#000080" stroke-width="1"/>
<circle cx="379.4" cy="548.5" r="3.9" fill="none" stroke="#000080" stroke-width="1"/>
<circle cx="389.3" cy="548.5" r="3.9" fill="none" stroke="#000080" stroke-width="1"/>
<circle cx="369.8" cy="558.8" r="3.9" fill="none" stroke="#000080" stroke-width="1"/>
<circle cx="379.4" cy="558.8" r="3.9" fill="none" stroke="#000080" stroke-width="1"/>
<circle cx="352.2" cy="568" r="9.8" fill="none" stroke="#000" stroke-width="1"/>
<circle cx="352.2" cy="568" r="6" fill="none" stroke="#000" stroke-width="1"/>
<text x="343.00" y="508.00" font-size="8.6" text-anchor="middle" fill="#333" transform="rotate(-90 343.00 508.00)" textLength="8.20" lengthAdjust="spacingAndGlyphs" stroke="#333" stroke-width="0.12">18</text>
<text x="440.00" y="508.00" font-size="8.6" text-anchor="middle" fill="#333" transform="rotate(-90 440.00 508.00)" textLength="8.20" lengthAdjust="spacingAndGlyphs" stroke="#333" stroke-width="0.12">16</text>
<text x="343.00" y="568.00" font-size="8.6" text-anchor="middle" fill="#333" transform="rotate(-90 343.00 568.00)" textLength="8.20" lengthAdjust="spacingAndGlyphs" stroke="#333" stroke-width="0.12">17</text>
<path d="M455 459.5 Q455 457.5 460 457.5 L473 457.5 Q487.5 459.5 487.5 478.5 Q487.5 497.5 473 499.5 L460 499.5 Q455 499.5 455 497.5 Q456.5 478.5 455 459.5 Z" fill="none" stroke="#800000" stroke-width="1"/>
<path d="M455 518.4 Q455 516.4 460 516.4 L473 516.4 Q487.5 518.4 487.5 537.4 Q487.5 556.4 473 558.4 L460 558.4 Q455 558.4 455 556.4 Q456.5 537.4 455 518.4 Z" fill="none" stroke="#800000" stroke-width="1"/>
<text x="482.00" y="184.90" font-size="8.5" text-anchor="middle" fill="#2a2a2a" textLength="15.00" lengthAdjust="spacingAndGlyphs" stroke="#2a2a2a" stroke-width="0.12">7100</text>
<text x="139.50" y="202.70" font-size="8.5" text-anchor="middle" fill="#2a2a2a" textLength="11.25" lengthAdjust="spacingAndGlyphs" stroke="#2a2a2a" stroke-width="0.12">100</text>
<text x="193.50" y="202.70" font-size="8.5" text-anchor="middle" fill="#2a2a2a" textLength="15.00" lengthAdjust="spacingAndGlyphs" stroke="#2a2a2a" stroke-width="0.12">1000</text>
<text x="261.50" y="202.70" font-size="8.5" text-anchor="middle" fill="#2a2a2a" textLength="11.25" lengthAdjust="spacingAndGlyphs" stroke="#2a2a2a" stroke-width="0.12">400</text>
<text x="282.50" y="202.70" font-size="8.5" text-anchor="middle" fill="#2a2a2a" textLength="7.50" lengthAdjust="spacingAndGlyphs" stroke="#2a2a2a" stroke-width="0.12">18</text>
<text x="288.50" y="192.30" font-size="8.5" text-anchor="middle" fill="#2a2a2a" textLength="11.25" lengthAdjust="spacingAndGlyphs" stroke="#2a2a2a" stroke-width="0.12">100</text>
<text x="293.50" y="202.70" font-size="8.5" text-anchor="middle" fill="#2a2a2a" textLength="7.50" lengthAdjust="spacingAndGlyphs" stroke="#2a2a2a" stroke-width="0.12">18</text>
<text x="338.50" y="202.70" font-size="8.5" text-anchor="middle" fill="#2a2a2a" textLength="11.25" lengthAdjust="spacingAndGlyphs" stroke="#2a2a2a" stroke-width="0.12">900</text>
<text x="384.50" y="202.70" font-size="8.5" text-anchor="middle" fill="#2a2a2a" textLength="7.50" lengthAdjust="spacingAndGlyphs" stroke="#2a2a2a" stroke-width="0.12">22</text>
<text x="389.50" y="192.30" font-size="8.5" text-anchor="middle" fill="#2a2a2a" textLength="7.50" lengthAdjust="spacingAndGlyphs" stroke="#2a2a2a" stroke-width="0.12">96</text>
<text x="395.50" y="202.70" font-size="8.5" text-anchor="middle" fill="#2a2a2a" textLength="7.50" lengthAdjust="spacingAndGlyphs" stroke="#2a2a2a" stroke-width="0.12">18</text>
<text x="416.50" y="202.70" font-size="8.5" text-anchor="middle" fill="#2a2a2a" textLength="11.25" lengthAdjust="spacingAndGlyphs" stroke="#2a2a2a" stroke-width="0.12">400</text>
<text x="484.50" y="202.70" font-size="8.5" text-anchor="middle" fill="#2a2a2a" textLength="15.00" lengthAdjust="spacingAndGlyphs" stroke="#2a2a2a" stroke-width="0.12">1000</text>
<text x="682.50" y="202.70" font-size="8.5" text-anchor="middle" fill="#2a2a2a" textLength="15.00" lengthAdjust="spacingAndGlyphs" stroke="#2a2a2a" stroke-width="0.12">3028</text>
<text x="139.50" y="216.70" font-size="8.5" text-anchor="middle" fill="#2a2a2a" textLength="11.25" lengthAdjust="spacingAndGlyphs" stroke="#2a2a2a" stroke-width="0.12">100</text>
<text x="193.50" y="216.70" font-size="8.5" text-anchor="middle" fill="#2a2a2a" textLength="15.00" lengthAdjust="spacingAndGlyphs" stroke="#2a2a2a" stroke-width="0.12">1000</text>
<text x="243.50" y="216.70" font-size="8.5" text-anchor="middle" fill="#2a2a2a" textLength="7.50" lengthAdjust="spacingAndGlyphs" stroke="#2a2a2a" stroke-width="0.12">18</text>
<text x="268.50" y="216.70" font-size="8.5" text-anchor="middle" fill="#2a2a2a" textLength="11.25" lengthAdjust="spacingAndGlyphs" stroke="#2a2a2a" stroke-width="0.12">500</text>
<text x="293.50" y="216.70" font-size="8.5" text-anchor="middle" fill="#2a2a2a" textLength="7.50" lengthAdjust="spacingAndGlyphs" stroke="#2a2a2a" stroke-width="0.12">18</text>
<text x="338.50" y="216.70" font-size="8.5" text-anchor="middle" fill="#2a2a2a" textLength="11.25" lengthAdjust="spacingAndGlyphs" stroke="#2a2a2a" stroke-width="0.12">900</text>
<text x="383.50" y="216.70" font-size="8.5" text-anchor="middle" fill="#2a2a2a" textLength="7.50" lengthAdjust="spacingAndGlyphs" stroke="#2a2a2a" stroke-width="0.12">18</text>
<text x="409.50" y="216.70" font-size="8.5" text-anchor="middle" fill="#2a2a2a" textLength="11.25" lengthAdjust="spacingAndGlyphs" stroke="#2a2a2a" stroke-width="0.12">500</text>
<text x="434.50" y="216.70" font-size="8.5" text-anchor="middle" fill="#2a2a2a" textLength="7.50" lengthAdjust="spacingAndGlyphs" stroke="#2a2a2a" stroke-width="0.12">18</text>
<text x="484.50" y="216.70" font-size="8.5" text-anchor="middle" fill="#2a2a2a" textLength="15.00" lengthAdjust="spacingAndGlyphs" stroke="#2a2a2a" stroke-width="0.12">1000</text>
<text x="563.50" y="216.70" font-size="8.5" text-anchor="middle" fill="#2a2a2a" textLength="11.25" lengthAdjust="spacingAndGlyphs" stroke="#2a2a2a" stroke-width="0.12">600</text>
<text x="621.50" y="216.70" font-size="8.5" text-anchor="middle" fill="#2a2a2a" textLength="11.25" lengthAdjust="spacingAndGlyphs" stroke="#2a2a2a" stroke-width="0.12">600</text>
<text x="740.50" y="216.70" font-size="8.5" text-anchor="middle" fill="#2a2a2a" textLength="15.00" lengthAdjust="spacingAndGlyphs" stroke="#2a2a2a" stroke-width="0.12">1828</text>
<text x="408.50" y="849.70" font-size="8.5" text-anchor="middle" fill="#2a2a2a" textLength="15.00" lengthAdjust="spacingAndGlyphs" stroke="#2a2a2a" stroke-width="0.12">5600</text>
<text x="756.50" y="849.70" font-size="8.5" text-anchor="middle" fill="#2a2a2a" textLength="15.00" lengthAdjust="spacingAndGlyphs" stroke="#2a2a2a" stroke-width="0.12">1500</text>
<text x="54.40" y="527.50" font-size="8.5" text-anchor="middle" fill="#2a2a2a" transform="rotate(-90 54.40 527.50)" textLength="15.00" lengthAdjust="spacingAndGlyphs" stroke="#2a2a2a" stroke-width="0.12">5600</text>
<text x="68.90" y="304.50" font-size="8.5" text-anchor="middle" fill="#2a2a2a" transform="rotate(-90 68.90 304.50)" textLength="15.00" lengthAdjust="spacingAndGlyphs" stroke="#2a2a2a" stroke-width="0.12">1050</text>
<text x="68.90" y="405.50" font-size="8.5" text-anchor="middle" fill="#2a2a2a" transform="rotate(-90 68.90 405.50)" textLength="15.00" lengthAdjust="spacingAndGlyphs" stroke="#2a2a2a" stroke-width="0.12">1000</text>
<text x="68.90" y="628.50" font-size="8.5" text-anchor="middle" fill="#2a2a2a" transform="rotate(-90 68.90 628.50)" textLength="15.00" lengthAdjust="spacingAndGlyphs" stroke="#2a2a2a" stroke-width="0.12">3550</text>
<text x="82.70" y="268.50" font-size="8.5" text-anchor="middle" fill="#2a2a2a" transform="rotate(-90 82.70 268.50)" textLength="11.25" lengthAdjust="spacingAndGlyphs" stroke="#2a2a2a" stroke-width="0.12">300</text>
<text x="82.70" y="542.50" font-size="8.5" text-anchor="middle" fill="#2a2a2a" transform="rotate(-90 82.70 542.50)" textLength="15.00" lengthAdjust="spacingAndGlyphs" stroke="#2a2a2a" stroke-width="0.12">5300</text>
<text x="96.90" y="280.50" font-size="8.5" text-anchor="middle" fill="#2a2a2a" transform="rotate(-90 96.90 280.50)" textLength="11.25" lengthAdjust="spacingAndGlyphs" stroke="#2a2a2a" stroke-width="0.12">560</text>
<text x="96.90" y="382.50" font-size="8.5" text-anchor="middle" fill="#2a2a2a" transform="rotate(-90 96.90 382.50)" textLength="15.00" lengthAdjust="spacingAndGlyphs" stroke="#2a2a2a" stroke-width="0.12">1522</text>
<text x="96.90" y="458.50" font-size="8.5" text-anchor="middle" fill="#2a2a2a" transform="rotate(-90 96.90 458.50)" textLength="7.50" lengthAdjust="spacingAndGlyphs" stroke="#2a2a2a" stroke-width="0.12">18</text>
<text x="96.90" y="508.50" font-size="8.5" text-anchor="middle" fill="#2a2a2a" transform="rotate(-90 96.90 508.50)" textLength="15.00" lengthAdjust="spacingAndGlyphs" stroke="#2a2a2a" stroke-width="0.12">1000</text>
<text x="96.90" y="558.50" font-size="8.5" text-anchor="middle" fill="#2a2a2a" transform="rotate(-90 96.90 558.50)" textLength="7.50" lengthAdjust="spacingAndGlyphs" stroke="#2a2a2a" stroke-width="0.12">18</text>
<text x="96.90" y="617.50" font-size="8.5" text-anchor="middle" fill="#2a2a2a" transform="rotate(-90 96.90 617.50)" textLength="15.00" lengthAdjust="spacingAndGlyphs" stroke="#2a2a2a" stroke-width="0.12">1200</text>
<text x="96.90" y="739.50" font-size="8.5" text-anchor="middle" fill="#2a2a2a" transform="rotate(-90 96.90 739.50)" textLength="15.00" lengthAdjust="spacingAndGlyphs" stroke="#2a2a2a" stroke-width="0.12">1282</text>
<text x="877.40" y="312.50" font-size="8.5" text-anchor="middle" fill="#2a2a2a" transform="rotate(-90 877.40 312.50)" textLength="15.00" lengthAdjust="spacingAndGlyphs" stroke="#2a2a2a" stroke-width="0.12">1200</text>
<text x="877.40" y="508.50" font-size="8.5" text-anchor="middle" fill="#2a2a2a" transform="rotate(-90 877.40 508.50)" textLength="15.00" lengthAdjust="spacingAndGlyphs" stroke="#2a2a2a" stroke-width="0.12">2800</text>
<text x="889.40" y="449.50" font-size="8.5" text-anchor="middle" fill="#2a2a2a" transform="rotate(-90 889.40 449.50)" textLength="15.00" lengthAdjust="spacingAndGlyphs" stroke="#2a2a2a" stroke-width="0.12">4000</text>
<text x="889.40" y="723.50" font-size="8.5" text-anchor="middle" fill="#2a2a2a" transform="rotate(-90 889.40 723.50)" textLength="15.00" lengthAdjust="spacingAndGlyphs" stroke="#2a2a2a" stroke-width="0.12">1600</text>
<path d="M948 68 H1045 V491 H948 Z" fill="#afb1a6"/>
<path d="M1000 68 Q1020 150 1022 320 Q1015 420 994 491 H1045 V68 Z" fill="#abada2"/>
<path d="M1042.5 68 L1045 68 L1045 78 Z" fill="#8f918a"/>
<line x1="948" y1="117.8" x2="977.1" y2="490.5" stroke="#5a5c58" stroke-width="0.8"/>
<g fill="#a0abab" stroke="#8f9896" stroke-width="0.5"><path d="M950 454.5 Q948.5 446 953 442.5 Q958 440.5 961 446 L961 449.5 Z"/><ellipse cx="961.8" cy="468.5" rx="8.6" ry="14.2" transform="rotate(-27 961.8 468.5)"/><path d="M974.2 459.5 Q970.5 454 973 450.5 Q977 447 980.5 449 L985.5 453.5 Z"/><ellipse cx="988.6" cy="472" rx="8.6" ry="15" transform="rotate(-38 988.6 472)"/></g>
<g fill="none" stroke="#bcc4c2" stroke-width="1.3" opacity="0.8"><path d="M963 456 Q970 462 971 475"/><path d="M989 459 Q998 466 999 480"/></g>
<line x1="991.5" y1="607.3" x2="1045" y2="607.3" stroke="#ff0000" stroke-width="1"/>
<line x1="991.5" y1="604" x2="991.5" y2="610.5" stroke="#ff0000" stroke-width="1"/>
<line x1="991.5" y1="624.5" x2="1045" y2="624.5" stroke="#ff0000" stroke-width="1"/>
<path d="M991.5 621.3 V627.7 M1000.5 621.3 V627.7" stroke="#ff0000" stroke-width="1"/>
<text x="996.00" y="630.50" font-size="7.8" text-anchor="middle" fill="#303070" textLength="11" lengthAdjust="spacingAndGlyphs">100</text>
<text x="1038.50" y="630.50" font-size="7.8" text-anchor="start" fill="#303070" textLength="7.5" lengthAdjust="spacingAndGlyphs">10</text>
<line x1="991.5" y1="873.2" x2="1045" y2="873.2" stroke="#ff0000" stroke-width="1"/>
<path d="M991.5 870 V876.5 M1000.5 870 V876.5" stroke="#ff0000" stroke-width="1"/>
<text x="996.00" y="880.00" font-size="7.8" text-anchor="middle" fill="#303070" textLength="11" lengthAdjust="spacingAndGlyphs">100</text>
<text x="1038.50" y="880.00" font-size="7.8" text-anchor="start" fill="#303070" textLength="7.5" lengthAdjust="spacingAndGlyphs">10</text>
<line x1="960.1" y1="639.7" x2="960.1" y2="858.3" stroke="#ff0000" stroke-width="1"/>
<path d="M957 639.7 H963.5 M957 858.3 H963.5" stroke="#ff0000" stroke-width="1"/>
<line x1="973.4" y1="639.7" x2="973.4" y2="858.3" stroke="#ff0000" stroke-width="1"/>
<path d="M970.2 858.3 H976.6" stroke="#ff0000" stroke-width="1"/>
<path d="M971.6 638.1 L975.2 641.3000000000001 M975.2 638.1 L971.6 641.3000000000001 M970.8 639.7 H976" stroke="#ff0000" stroke-width="1.1"/>
<path d="M971.6 663.9 L975.2 667.1 M975.2 663.9 L971.6 667.1 M970.8 665.5 H976" stroke="#ff0000" stroke-width="1.1"/>
<path d="M971.6 696.5 L975.2 699.7 M975.2 696.5 L971.6 699.7 M970.8 698.1 H976" stroke="#ff0000" stroke-width="1.1"/>
<path d="M971.6 729.1999999999999 L975.2 732.4 M975.2 729.1999999999999 L971.6 732.4 M970.8 730.8 H976" stroke="#ff0000" stroke-width="1.1"/>
<path d="M971.6 773.9 L975.2 777.1 M975.2 773.9 L971.6 777.1 M970.8 775.5 H976" stroke="#ff0000" stroke-width="1.1"/>
<path d="M971.6 842.9 L975.2 846.1 M975.2 842.9 L971.6 846.1 M970.8 844.5 H976" stroke="#ff0000" stroke-width="1.1"/>
<text x="967.60" y="754.00" font-size="7.8" text-anchor="middle" fill="#303070" transform="rotate(-90 967.60 754.00)" textLength="15" lengthAdjust="spacingAndGlyphs">2400</text>
<text x="981.00" y="639.00" font-size="7.8" text-anchor="middle" fill="#303070" transform="rotate(-90 981.00 639.00)" textLength="15.00" lengthAdjust="spacingAndGlyphs">2400</text>
<text x="981.00" y="665.00" font-size="7.8" text-anchor="middle" fill="#303070" transform="rotate(-90 981.00 665.00)" textLength="15.00" lengthAdjust="spacingAndGlyphs">2115</text>
<text x="981.00" y="697.50" font-size="7.8" text-anchor="middle" fill="#303070" transform="rotate(-90 981.00 697.50)" textLength="15.00" lengthAdjust="spacingAndGlyphs">1755</text>
<text x="981.00" y="729.50" font-size="7.8" text-anchor="middle" fill="#303070" transform="rotate(-90 981.00 729.50)" textLength="15.00" lengthAdjust="spacingAndGlyphs">1395</text>
<text x="981.00" y="776.00" font-size="7.8" text-anchor="middle" fill="#303070" transform="rotate(-90 981.00 776.00)" textLength="11.25" lengthAdjust="spacingAndGlyphs">910</text>
<text x="981.00" y="842.50" font-size="7.8" text-anchor="middle" fill="#303070" transform="rotate(-90 981.00 842.50)" textLength="11.25" lengthAdjust="spacingAndGlyphs">150</text>
<rect x="991.5" y="639.7" width="60" height="218.6" fill="#fefefe"/>
<rect x="991.5" y="663.2" width="60" height="70.4" fill="#d6d8cb"/>
<rect x="991.5" y="779" width="60" height="79.3" fill="#d6d8cb"/>
<line x1="992" y1="647.4" x2="1045" y2="647.4" stroke="#8a8a8a" stroke-width="0.9"/>
<path d="M993 646 Q994 641 999 641" fill="none" stroke="#777" stroke-width="1"/>
<line x1="991.5" y1="663.5" x2="1045" y2="663.5" stroke="#c8cabc" stroke-width="1"/>
<path d="M1000.5 665.7 H1045" stroke="#000" stroke-width="1.3"/>
<path d="M1007.3 691.3 V672.4 H1045" fill="none" stroke="#1a1a1a" stroke-width="0.9"/>
<line x1="1007.3" y1="691.3" x2="1045" y2="691.3" stroke="#777" stroke-width="0.9"/>
<line x1="1040" y1="693.6" x2="1045" y2="693.6" stroke="#999" stroke-width="0.9"/>
<path d="M1000.5 698.1 H1045" stroke="#000" stroke-width="1.3"/>
<path d="M1007.3 723.9 V705 H1045" fill="none" stroke="#1a1a1a" stroke-width="0.9"/>
<line x1="1007.3" y1="723.9" x2="1045" y2="723.9" stroke="#777" stroke-width="0.9"/>
<line x1="1040" y1="726.3" x2="1045" y2="726.3" stroke="#999" stroke-width="0.9"/>
<line x1="1000.5" y1="730.8" x2="1045" y2="730.8" stroke="#000" stroke-width="1.3"/>
<line x1="1000.5" y1="665" x2="1000.5" y2="731" stroke="#000" stroke-width="1.2"/>
<rect x="991.5" y="731.3" width="54" height="2.4" fill="#9a9c94"/>
<rect x="992" y="766.5" width="53" height="9" fill="#b88a5c"/>
<line x1="992" y1="775.6" x2="1045" y2="775.6" stroke="#111" stroke-width="1"/>
<rect x="992" y="776.2" width="53" height="2.8" fill="#d9a36c"/>
<rect x="1004.7" y="748.5" width="9" height="27" fill="#fff6dc" opacity="0.9"/>
<path d="M1006 753 H1012.5 L1010.5 762 L1012.5 775 H1006 L1008 762 Z" fill="#e8b850"/>
<rect x="1013.7" y="748.5" width="9" height="27" fill="#f4efe4" opacity="0.85"/>
<path d="M1004.7 748.6 H1022.9" stroke="#222" stroke-width="1.2"/>
<path d="M1000.3 779.5 H1045" stroke="#000" stroke-width="1.3"/>
<path d="M1007.3 805.5 V786.1 H1045" fill="none" stroke="#1a1a1a" stroke-width="0.9"/>
<line x1="1007.3" y1="805.5" x2="1045" y2="805.5" stroke="#666" stroke-width="0.9"/>
<line x1="1040.5" y1="783.5" x2="1045" y2="783.5" stroke="#000" stroke-width="1"/>
<path d="M1000.3 812.4 H1045" stroke="#000" stroke-width="1.3"/>
<path d="M1007.3 838.6 V819 H1045" fill="none" stroke="#1a1a1a" stroke-width="0.9"/>
<line x1="1007.3" y1="838.6" x2="1045" y2="838.6" stroke="#666" stroke-width="0.9"/>
<line x1="1040.5" y1="816.5" x2="1045" y2="816.5" stroke="#000" stroke-width="1"/>
<line x1="1000.3" y1="845.2" x2="1045" y2="845.2" stroke="#333" stroke-width="1.3"/>
<line x1="1000.3" y1="779.5" x2="1000.3" y2="858" stroke="#000" stroke-width="1.1"/>
<line x1="1000.3" y1="846" x2="1000.3" y2="858" stroke="#888" stroke-width="1"/>
<path d="M991.5 639.7 H1045 M991.5 639.7 V858.3 H1045" fill="none" stroke="#000" stroke-width="1.5"/>
<path d="M1031.5 960 V949.5 H1045" fill="none" stroke="#e6e6e6" stroke-width="1"/>
</svg></body></html>
